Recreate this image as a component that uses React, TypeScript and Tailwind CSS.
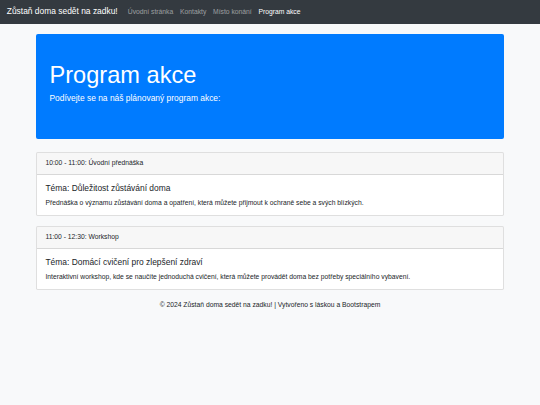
import React from "react";

const items = [
  {
    time: "10:00 - 11:00: Úvodní přednáška",
    title: "Téma: Důležitost zůstávání doma",
    text: "Přednáška o významu zůstávání doma a opatření, která můžete přijmout k ochraně sebe a svých blízkých.",
  },
  {
    time: "11:00 - 12:30: Workshop",
    title: "Téma: Domácí cvičení pro zlepšení zdraví",
    text: "Interaktivní workshop, kde se naučíte jednoduchá cvičení, která můžete provádět doma bez potřeby speciálního vybavení.",
  },
];

export default function App() {
  return (
    <div
      className="min-h-[405px] bg-[#f8f9fa] text-[#212529]"
      style={{ fontFamily: '"Liberation Sans", Arial, sans-serif' }}
    >
      <nav className="h-[23.6px] bg-[#343a40] flex items-center px-[6.75px]">
        <span className="text-[8.44px] leading-[12.66px] text-white mr-[6.75px]">
          Zůstaň doma sedět na zadku!
        </span>
        <div className="flex text-[6.75px] leading-[10.125px]">
          <span className="px-[3.375px] text-white/50">Úvodní stránka</span>
          <span className="px-[3.375px] text-white/50">Kontakty</span>
          <span className="px-[3.375px] text-white/50">Místo konání</span>
          <span className="px-[3.375px] text-white">Program akce</span>
        </div>
      </nav>
      <div className="w-[468px] mx-auto mt-[10.1px]">
        <div className="bg-[#007bff] text-white rounded-[2px] px-[13.5px] py-[27px] mb-[13.5px]">
          <h1 className="text-[23.6px] leading-[28.35px] font-light mb-[3.375px]">
            Program akce
          </h1>
          <p className="text-[8.44px] leading-[12.66px] mb-[6.75px]">
            Podívejte se na náš plánovaný program akce:
          </p>
        </div>
        {items.map((it) => (
          <div
            key={it.time}
            className="bg-white border border-black/[0.125] rounded-[1.7px] mb-[10.5px]"
          >
            <div className="bg-black/[0.03] border-b border-black/[0.125] px-[8.44px] py-[5.06px] text-[6.75px] leading-[10.125px]">
              {it.time}
            </div>
            <div className="px-[8.44px] pt-[8px] pb-[7px]">
              <h5 className="text-[8.44px] leading-[10.125px] mb-[5.06px]">
                {it.title}
              </h5>
              <p className="text-[6.75px] leading-[10.125px]">{it.text}</p>
            </div>
          </div>
        ))}
        <footer className="text-center text-[6.75px] leading-[10.125px] mt-[-0.5px]">
          © 2024 Zůstaň doma sedět na zadku! | Vytvořeno s láskou a Bootstrapem
        </footer>
      </div>
    </div>
  );
}
